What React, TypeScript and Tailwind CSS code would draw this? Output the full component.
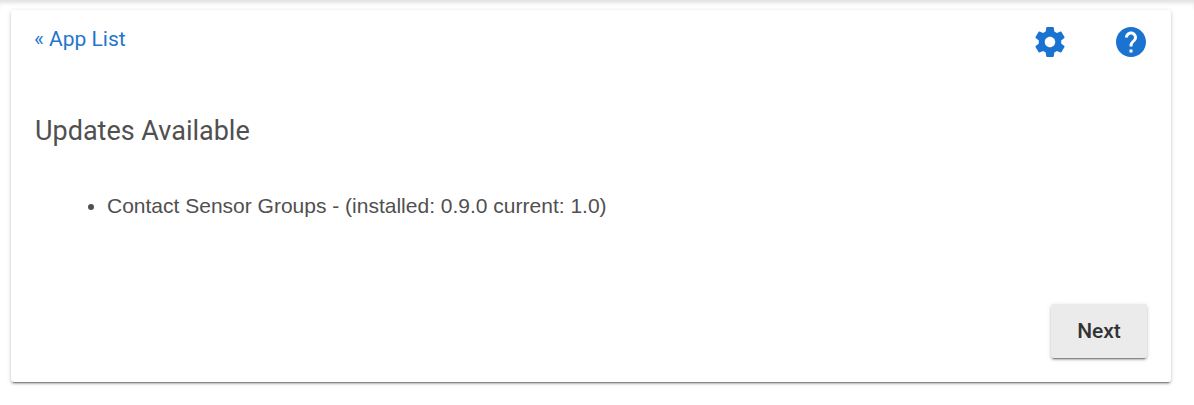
const gearPath =
  "M19.43 12.98c.04-.32.07-.64.07-.98s-.03-.66-.07-.98l2.11-1.65c.19-.15.24-.42.12-.64l-2-3.46c-.12-.22-.39-.3-.61-.22l-2.49 1c-.52-.4-1.08-.73-1.69-.98l-.38-2.65C14.46 2.18 14.25 2 14 2h-4c-.25 0-.46.18-.49.42l-.38 2.65c-.61.25-1.17.59-1.69.98l-2.49-1c-.23-.09-.49 0-.61.22l-2 3.46c-.13.22-.07.49.12.64l2.11 1.65c-.04.32-.07.65-.07.98s.03.66.07.98l-2.11 1.65c-.19.15-.24.42-.12.64l2 3.46c.12.22.39.3.61.22l2.49-1c.52.4 1.08.73 1.69.98l.38 2.65c.03.24.24.42.49.42h4c.25 0 .46-.18.49-.42l.38-2.65c.61-.25 1.17-.59 1.69-.98l2.49 1c.23.09.49 0 .61-.22l2-3.46c.12-.22.07-.49-.12-.64l-2.11-1.65zM12 15.5c-1.93 0-3.5-1.57-3.5-3.5s1.57-3.5 3.5-3.5 3.5 1.57 3.5 3.5-1.57 3.5-3.5 3.5z";
const helpPath =
  "M12 2C6.48 2 2 6.48 2 12s4.48 10 10 10 10-4.48 10-10S17.52 2 12 2zm1 17h-2v-2h2v2zm2.07-7.75l-.9.92C13.45 12.9 13 13.5 13 15h-2v-.5c0-1.1.45-2.1 1.17-2.83l1.24-1.26c.37-.36.59-.86.59-1.41 0-1.1-.9-2-2-2s-2 .9-2 2H8c0-2.21 1.79-4 4-4s4 1.79 4 4c0 .88-.36 1.68-.93 2.25z";

const Icon = ({ d }: { d: string }) => (
  <svg viewBox="0 0 24 24" className="w-9 h-9 fill-[#1a73d0]">
    <path d={d} />
  </svg>
);

export default function App() {
  return (
    <div className="h-[405px] bg-white overflow-hidden font-['Roboto',sans-serif]">
      {/* Top bar edge */}
      <div className="h-[10px] bg-white shadow-[inset_0_5px_4px_-2px_rgba(0,0,0,0.12)]" />

      {/* Card */}
      <div className="ml-[11px] w-[1160px] h-[372px] bg-white rounded-[3px] flex flex-col shadow-[0_2px_2px_0_rgba(0,0,0,0.2),0_3px_1px_-2px_rgba(0,0,0,0.3),0_1px_5px_0_rgba(0,0,0,0.14)]">
        <div className="flex justify-between pl-[23px] pr-[22px] pt-[14px]">
          <a href="#" className="text-[21px] leading-[30px] text-[#1f76cc]">
            « App List
          </a>
          <div className="flex gap-[45px]">
            <Icon d={gearPath} />
            <Icon d={helpPath} />
          </div>
        </div>

        <h2 className="ml-[24px] mt-[52px] text-[27px] leading-[38px] text-[#505050]">
          Updates Available
        </h2>

        <ul className="ml-[96px] mt-[41px] list-disc text-[21px] leading-[30px] text-[#505050] font-['Liberation_Sans',sans-serif]">
          <li>Contact Sensor Groups - (installed: 0.9.0 current: 1.0)</li>
        </ul>

        <div className="flex justify-end mt-auto pr-[24px] pb-[24px]">
          <button className="w-[96px] h-[54px] pt-[2px] rounded-[3px] bg-[#ebebeb] text-[21px] font-medium text-[#333333] shadow-[0_2px_2px_0_rgba(0,0,0,0.2),0_3px_1px_-2px_rgba(0,0,0,0.3),0_1px_5px_0_rgba(0,0,0,0.14)]">
            Next
          </button>
        </div>
      </div>
    </div>
  );
}
